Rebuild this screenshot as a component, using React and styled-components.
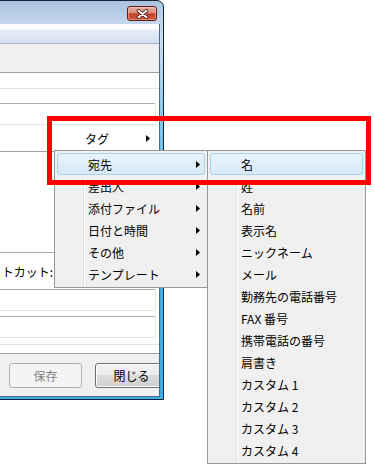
import React from "react";
import styled, { createGlobalStyle } from "styled-components";

const GlobalStyle = createGlobalStyle`
  html, body { margin: 0; padding: 0; background: #fff; }
  body {
    font-family: "Noto Sans CJK JP", "Noto Sans", sans-serif;
    font-size: 12px; color: #000; overflow: hidden;
  }
`;

const Stage = styled.div`
  position: relative; width: 375px; height: 472px; overflow: hidden; background: #fff;
`;

/* ---------- dialog window (left part is off-screen) ---------- */

const Window = styled.div`
  width: 364px; height: 400px; margin-left: -200px; box-sizing: border-box;
  border: 1px solid #16243a; border-top-right-radius: 7px;
  padding: 0 3px 2px 0;
  background: linear-gradient(#a9c3e0, #c3d6ec 22px, #c8daef 44px, #86c7eb 120px, #3fb2e4 220px, #3aafe3);
  display: flex; flex-direction: column;
`;

const TitleBar = styled.div`
  height: 23px; flex-shrink: 0; box-sizing: border-box;
  display: flex; justify-content: flex-end; align-items: flex-start;
  padding: 5px 3px 0 0;
`;

const CloseBtn = styled.div`
  width: 30px; height: 15px; box-sizing: border-box;
  border: 1px solid #5b1c16; border-radius: 3px;
  background: linear-gradient(#eab0a4, #dc8a7a 45%, #c4442f 52%, #cd5a43 100%);
  box-shadow: inset 0 0 0 1px rgba(255, 210, 200, 0.45);
  display: flex; align-items: center; justify-content: center;
`;

const Client = styled.div`
  flex: 1; min-height: 0; background: #fff; overflow: hidden;
  border-right: 1px solid #4d6b90; border-bottom: 1px solid #4d6b90;
  display: flex; flex-direction: column;
`;

const TopBand = styled.div`
  height: 19px; flex-shrink: 0;
  border-bottom: 1px solid #a5b4c8;
  background: linear-gradient(#fff 0, #fff 5px, #e7edf8 6px, #d5dff0 100%);
`;

const GrayBand = styled.div`
  height: 28px; flex-shrink: 0; background: #f0f0f0;
  border-bottom: 1px solid #a0a0a0;
`;

const Body = styled.div`
  flex: 1; display: flex; flex-direction: column; background: #fff;
`;

const Rule = styled.div`
  flex-shrink: 0;
  height: ${({ $h }) => $h || 0}px;
  margin-top: ${({ $mt }) => $mt || 0}px;
  border-bottom: 1px solid ${({ $color }) => $color};
`;

const TextBox = styled.div`
  height: 22px; flex-shrink: 0; box-sizing: border-box;
  margin: ${({ $mt }) => $mt || 0}px 3px 0 60px;
  border: 1px solid #e2e3ea; border-top-color: #abadb3; border-radius: 2px;
  background: #fff;
`;

const LabelRow = styled.div`
  height: 36px; flex-shrink: 0; display: flex; align-items: center;
`;

const Label = styled.span`
  width: 252px; text-align: right; white-space: nowrap; color: #000;
`;

const Footer = styled.div`
  margin-top: auto; height: 43px; flex-shrink: 0; box-sizing: border-box;
  background: #f0f0f0; border-top: 1px solid #a0a0a0;
  display: flex; align-items: flex-start; gap: 13px;
  padding: 9px 0 0 208px;
`;

const Button = styled.div`
  width: 73px; height: 25px; flex-shrink: 0; box-sizing: border-box;
  border-radius: 3px; font-size: 12px;
  display: flex; align-items: center; justify-content: center;
  border: 1px solid ${({ $disabled }) => ($disabled ? "#adb2b5" : "#707070")};
  color: ${({ $disabled }) => ($disabled ? "#838383" : "#000")};
  background: ${({ $disabled }) =>
    $disabled ? "#f4f4f4" : "linear-gradient(#f2f2f2 0, #ebebeb 50%, #dddddd 50%, #cfcfcf 100%)"};
  box-shadow: inset 0 0 0 1px ${({ $disabled }) => ($disabled ? "#f4f4f4" : "#fcfcfc")};
`;

/* ---------- context menus ---------- */

const Menu = styled.div`
  position: absolute; left: ${({ $left }) => $left}px; top: ${({ $top }) => $top}px;
  width: ${({ $width }) => $width}px; box-sizing: border-box; padding: 2px;
  border: 1px solid ${({ $plain }) => ($plain ? "transparent" : "#979797")};
  background: ${({ $plain }) =>
    $plain
      ? "transparent"
      : "linear-gradient(to right, #f0f0f0 0 28px, #e2e3e3 28px 29px, #fff 29px 30px, #f0f0f0 30px)"};
`;

const Item = styled.div`
  height: 22px; box-sizing: border-box; display: flex; align-items: center;
  padding: 0 4px 0 30px; border-radius: 3px; white-space: nowrap;
  border: 1px solid ${({ $active }) => ($active ? "#a6d2ea" : "transparent")};
  background: ${({ $active }) => ($active ? "linear-gradient(#e9f3fb, #d7e9f6)" : "transparent")};
`;

const ItemText = styled.span` flex: 1; `;

const Highlight = styled.div`
  position: absolute; left: 47px; top: 116px; width: 324px; height: 69px;
  box-sizing: border-box; border: 5px solid #ff0000; pointer-events: none;
`;

const Arrow = () => (
  <svg width="4" height="7" viewBox="0 0 4 7">
    <polygon points="0,0 4,3.5 0,7" fill="#000" />
  </svg>
);

const CloseGlyph = () => (
  <svg width="13" height="10" viewBox="0 0 13 10">
    <path d="M2.5 1.8 L10.5 8.2 M10.5 1.8 L2.5 8.2" stroke="#4a1410" strokeWidth="3.6" strokeLinecap="round" />
    <path d="M2.5 1.8 L10.5 8.2 M10.5 1.8 L2.5 8.2" stroke="#fff" strokeWidth="2" strokeLinecap="round" />
  </svg>
);

const fieldMenu = ["宛先", "差出人", "添付ファイル", "日付と時間", "その他", "テンプレート"];
const toMenu = [
  "名", "姓", "名前", "表示名", "ニックネーム", "メール", "勤務先の電話番号",
  "FAX 番号", "携帯電話の番号", "肩書き", "カスタム 1", "カスタム 2", "カスタム 3", "カスタム 4",
];

export default function App() {
  return (
    <Stage>
      <GlobalStyle />
      <Window>
        <TitleBar>
          <CloseBtn><CloseGlyph /></CloseBtn>
        </TitleBar>
        <Client>
          <TopBand />
          <GrayBand />
          <Body>
            <Rule $h={15} $color="#dce3eb" />
            <TextBox $mt={14} />
            <Rule $mt={26} $color="#a0a0a0" />
            <Rule $h={100} $color="#a8a8a8" />
            <LabelRow>
              <Label>トカット:</Label>
            </LabelRow>
            <TextBox />
            <TextBox $mt={5} />
            <Rule $mt={6} $color="#dde4ec" />
            <Footer>
              <Button $disabled>保存</Button>
              <Button>閉じる</Button>
            </Footer>
          </Body>
        </Client>
      </Window>

      <Menu $plain $left={51} $top={124} $width={107}>
        <Item><ItemText>タグ</ItemText><Arrow /></Item>
      </Menu>

      <Menu $left={54} $top={150} $width={154}>
        {fieldMenu.map((label, i) => (
          <Item key={label} $active={i === 0}>
            <ItemText>{label}</ItemText>
            <Arrow />
          </Item>
        ))}
      </Menu>

      <Menu $left={207} $top={150} $width={159}>
        {toMenu.map((label, i) => (
          <Item key={label} $active={i === 0}>
            <ItemText>{label}</ItemText>
          </Item>
        ))}
      </Menu>

      <Highlight />
    </Stage>
  );
}
